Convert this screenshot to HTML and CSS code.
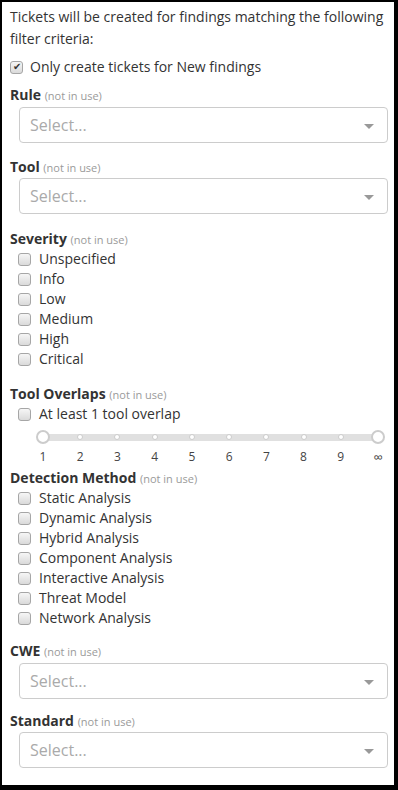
FILE: index.html
```html
<!DOCTYPE html>
<html lang="en">
<head>
  <meta charset="UTF-8">
  <title>Ticket Filter Criteria</title>
  <link rel="stylesheet" href="styles.css">
</head>
<body>
  <div class="panel">
    <p class="intro">Tickets will be created for findings matching the following filter criteria:</p>

    <label class="check only-new">
      <input type="checkbox" checked>
      <span>Only create tickets for New findings</span>
    </label>

    <div class="field rule">
      <div class="field-label">Rule <small>(not in use)</small></div>
      <div class="select"><span>Select...</span><i class="arrow"></i></div>
    </div>

    <div class="field tool">
      <div class="field-label">Tool <small>(not in use)</small></div>
      <div class="select"><span>Select...</span><i class="arrow"></i></div>
    </div>

    <div class="field severity">
      <div class="field-label">Severity <small>(not in use)</small></div>
      <div class="options">
        <label class="check"><input type="checkbox"><span>Unspecified</span></label>
        <label class="check"><input type="checkbox"><span>Info</span></label>
        <label class="check"><input type="checkbox"><span>Low</span></label>
        <label class="check"><input type="checkbox"><span>Medium</span></label>
        <label class="check"><input type="checkbox"><span>High</span></label>
        <label class="check"><input type="checkbox"><span>Critical</span></label>
      </div>
    </div>

    <div class="field overlaps">
      <div class="field-label">Tool Overlaps <small>(not in use)</small></div>
      <div class="options">
        <label class="check"><input type="checkbox"><span>At least 1 tool overlap</span></label>
      </div>
      <div class="slider">
        <div class="slider-track">
          <span class="stop end"></span>
          <span class="stop"></span>
          <span class="stop"></span>
          <span class="stop"></span>
          <span class="stop"></span>
          <span class="stop"></span>
          <span class="stop"></span>
          <span class="stop"></span>
          <span class="stop"></span>
          <span class="stop end"></span>
        </div>
        <div class="slider-labels">
          <span>1</span><span>2</span><span>3</span><span>4</span><span>5</span>
          <span>6</span><span>7</span><span>8</span><span>9</span><span class="inf">&infin;</span>
        </div>
      </div>
    </div>

    <div class="field detection">
      <div class="field-label">Detection Method <small>(not in use)</small></div>
      <div class="options">
        <label class="check"><input type="checkbox"><span>Static Analysis</span></label>
        <label class="check"><input type="checkbox"><span>Dynamic Analysis</span></label>
        <label class="check"><input type="checkbox"><span>Hybrid Analysis</span></label>
        <label class="check"><input type="checkbox"><span>Component Analysis</span></label>
        <label class="check"><input type="checkbox"><span>Interactive Analysis</span></label>
        <label class="check"><input type="checkbox"><span>Threat Model</span></label>
        <label class="check"><input type="checkbox"><span>Network Analysis</span></label>
      </div>
    </div>

    <div class="field cwe">
      <div class="field-label">CWE <small>(not in use)</small></div>
      <div class="select"><span>Select...</span><i class="arrow"></i></div>
    </div>

    <div class="field standard">
      <div class="field-label">Standard <small>(not in use)</small></div>
      <div class="select"><span>Select...</span><i class="arrow"></i></div>
    </div>
  </div>
</body>
</html>
```

FILE: styles.css
```css
html, body {
  margin: 0;
  height: 100%;
}

body {
  background: #000;
  font-family: 'Open Sans', 'Liberation Sans', sans-serif;
  font-size: 14px;
  color: #333;
  overflow: hidden;
}

.panel {
  background: #fff;
  margin: 2px 4px 0 2px;
  height: 783px;
  padding: 0 6px 0 8px;
  box-sizing: border-box;
}

.intro {
  margin: 0;
  padding-top: 4px;
  line-height: 22px;
}

.check {
  display: flex;
  align-items: center;
  height: 20px;
  line-height: 20px;
}

.check input {
  appearance: none;
  -webkit-appearance: none;
  width: 13px;
  height: 13px;
  margin: 0 8px 0 0;
  border: 1px solid #a6a6a6;
  border-radius: 3px;
  background: linear-gradient(#f6f6f6, #dadada);
  box-sizing: border-box;
  display: grid;
  place-items: center;
}

.check input:checked::after {
  content: "\2714";
  font-size: 10px;
  line-height: 10px;
  color: #333;
}

.only-new {
  margin-top: 7px;
}

.only-new input {
  margin-right: 7px;
}

.field-label {
  font-weight: 700;
  height: 20px;
  line-height: 20px;
}

.field-label small {
  font-weight: 400;
  font-size: 11px;
  line-height: 1;
  color: #9a9a9a;
}

.field {
  margin-top: 14px;
}

.rule {
  margin-top: 8px;
}

.severity {
  margin-top: 15px;
}

.overlaps {
  margin-top: 15px;
}

.detection {
  margin-top: 0;
}

.cwe {
  margin-top: 13px;
}

.standard {
  margin-top: 12px;
}

.select {
  margin: 2px 0 0 9px;
  height: 36px;
  border: 1px solid #ccc;
  border-radius: 4px;
  box-sizing: border-box;
  display: flex;
  align-items: center;
  justify-content: space-between;
  padding: 0 13px 0 10px;
  font-size: 16px;
  color: #aaa;
}

.tool .select {
  margin-top: 1px;
}

.standard .select {
  margin-top: 1px;
}

.arrow {
  width: 0;
  height: 0;
  border-left: 5px solid transparent;
  border-right: 5px solid transparent;
  border-top: 5px solid #999;
  margin-top: 2px;
}

.options {
  padding-left: 8px;
}

.slider {
  padding: 6px 3px 0 26px;
  height: 38px;
}

.slider-track {
  display: flex;
  justify-content: space-between;
  align-items: center;
  height: 14px;
  background: linear-gradient(#e0e0e0, #e0e0e0) center / calc(100% - 14px) 7px no-repeat;
}

.stop {
  width: 14px;
  height: 14px;
  display: grid;
  place-items: center;
}

.stop::after {
  content: "";
  width: 6px;
  height: 6px;
  border-radius: 50%;
  background: #fff;
  border: 1px solid #ccc;
  box-sizing: border-box;
}

.stop.end::after {
  width: 14px;
  height: 14px;
  border: 2px solid #ccc;
}

.slider-labels {
  display: flex;
  justify-content: space-between;
  margin-top: 5px;
  font-size: 12px;
  color: #444;
  line-height: 16px;
}

.slider-labels span {
  width: 14px;
  text-align: center;
}

.slider-labels .inf {
  font-size: 13px;
}
```
